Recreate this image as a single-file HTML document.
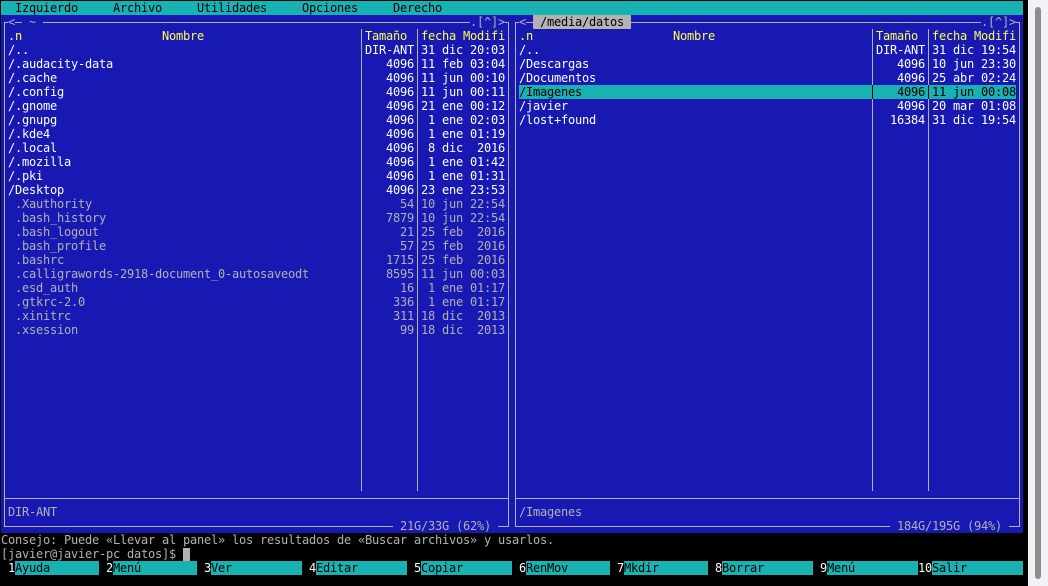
<!DOCTYPE html>
<html lang="es"><head><meta charset="utf-8"><title>mc</title>
<style>
html,body{margin:0;padding:0;background:#000;}
body{position:relative;width:1048px;height:586px;overflow:hidden;font:12px/14px "DejaVu Sans Mono",monospace;letter-spacing:-0.224px;color:#b2b2b2;}
div,i,b{position:absolute;font-style:normal;font-weight:normal;white-space:pre;}
.bg{background:#18b2b2}.bl{background:#1818b2}.l{background:#b2b2b2}
.r{left:0;width:1048px;height:14px}
.w{color:#fff}.y{color:#ffff54}.k{color:#000}.g{color:#b2b2b2}
.s,.S{width:49px;text-align:right}
.n{left:8px}.s{left:365px}.d{left:421px}
.N{left:519px}.S{left:876px}.D{left:932px}
</style></head><body>
<div style="left:1028px;top:0;width:20px;height:586px;background:#f2f1f6"></div>
<div style="left:1035px;top:7px;width:6px;height:572px;background:#8e8e8e;border-radius:3px"></div>
<div style="left:0;top:0;width:1028px;height:586px;background:#000"></div>
<div class="bg" style="left:1px;top:1px;width:1022px;height:14px"></div>
<div class="bl" style="left:1px;top:15px;width:1022px;height:518px"></div>

<div class="r k" style="top:1px"><i style="left:15px">Izquierdo</i><i style="left:113px">Archivo</i><i style="left:197px">Utilidades</i><i style="left:302px">Opciones</i><i style="left:393px">Derecho</i></div>

<!-- selected row -->
<div class="bg" style="left:519px;top:85px;width:497px;height:14px"></div>

<!-- frame lines -->
<div class="l" style="left:4px;top:22px;width:1px;height:505px"></div>
<div class="l" style="left:508px;top:22px;width:1px;height:505px"></div>
<div class="l" style="left:515px;top:22px;width:1px;height:505px"></div>
<div class="l" style="left:1019px;top:22px;width:1px;height:505px"></div>
<div class="l" style="left:4px;top:22px;width:4px;height:1px"></div>
<div class="l" style="left:15px;top:22px;width:7px;height:1px"></div>
<div class="l" style="left:43px;top:22px;width:427px;height:1px"></div>
<div class="l" style="left:505px;top:22px;width:3px;height:1px"></div>
<div class="l" style="left:515px;top:22px;width:4px;height:1px"></div>
<div class="l" style="left:526px;top:22px;width:7px;height:1px"></div>
<div class="l" style="left:631px;top:22px;width:350px;height:1px"></div>
<div class="l" style="left:1016px;top:22px;width:3px;height:1px"></div>
<div class="l" style="left:4px;top:498px;width:505px;height:1px"></div>
<div class="l" style="left:515px;top:498px;width:505px;height:1px"></div>
<div class="l" style="left:4px;top:526px;width:389px;height:1px"></div>
<div class="l" style="left:498px;top:526px;width:11px;height:1px"></div>
<div class="l" style="left:515px;top:526px;width:375px;height:1px"></div>
<div class="l" style="left:1009px;top:526px;width:11px;height:1px"></div>
<div class="l" style="left:361px;top:29px;width:1px;height:462px"></div>
<div class="l" style="left:417px;top:29px;width:1px;height:462px"></div>
<div class="l" style="left:872px;top:29px;width:1px;height:462px"></div>
<div class="l" style="left:928px;top:29px;width:1px;height:462px"></div>
<div style="left:872px;top:85px;width:1px;height:14px;background:#000"></div>
<div style="left:928px;top:85px;width:1px;height:14px;background:#000"></div>

<!-- title row -->
<div class="r" style="top:15px"><i style="left:8px">&lt;</i><i style="left:29px">~</i><i style="left:470px">.[^]&gt;</i><i style="left:519px">&lt;</i><i class="k" style="left:533px;width:98px;background:#b2b2b2"> /media/datos </i><i style="left:981px">.[^]&gt;</i></div>

<!-- headers -->
<div class="r y" style="top:29px"><i class="n">.n</i><i style="left:162px">Nombre</i><i style="left:365px">Tamaño</i><i class="d">fecha Modifi</i><i class="N">.n</i><i style="left:673px">Nombre</i><i style="left:876px">Tamaño</i><i class="D">fecha Modifi</i></div>

<!-- rows -->
<div class="r w" style="top:43px"><i class="n">/..</i><i class="s">DIR-ANT</i><i class="d">31 dic 20:03</i><i class="N">/..</i><i class="S">DIR-ANT</i><i class="D">31 dic 19:54</i></div>
<div class="r w" style="top:57px"><i class="n">/.audacity-data</i><i class="s">4096</i><i class="d">11 feb 03:04</i><i class="N">/Descargas</i><i class="S">4096</i><i class="D">10 jun 23:30</i></div>
<div class="r w" style="top:71px"><i class="n">/.cache</i><i class="s">4096</i><i class="d">11 jun 00:10</i><i class="N">/Documentos</i><i class="S">4096</i><i class="D">25 abr 02:24</i></div>
<div class="r w" style="top:85px"><i class="n">/.config</i><i class="s">4096</i><i class="d">11 jun 00:11</i><i class="N k">/Imagenes</i><i class="S k">4096</i><i class="D k">11 jun 00:08</i></div>
<div class="r w" style="top:99px"><i class="n">/.gnome</i><i class="s">4096</i><i class="d">21 ene 00:12</i><i class="N">/javier</i><i class="S">4096</i><i class="D">20 mar 01:08</i></div>
<div class="r w" style="top:113px"><i class="n">/.gnupg</i><i class="s">4096</i><i class="d"> 1 ene 02:03</i><i class="N">/lost+found</i><i class="S">16384</i><i class="D">31 dic 19:54</i></div>
<div class="r w" style="top:127px"><i class="n">/.kde4</i><i class="s">4096</i><i class="d"> 1 ene 01:19</i></div>
<div class="r w" style="top:141px"><i class="n">/.local</i><i class="s">4096</i><i class="d"> 8 dic  2016</i></div>
<div class="r w" style="top:155px"><i class="n">/.mozilla</i><i class="s">4096</i><i class="d"> 1 ene 01:42</i></div>
<div class="r w" style="top:169px"><i class="n">/.pki</i><i class="s">4096</i><i class="d"> 1 ene 01:31</i></div>
<div class="r w" style="top:183px"><i class="n">/Desktop</i><i class="s">4096</i><i class="d">23 ene 23:53</i></div>
<div class="r" style="top:197px"><i class="n"> .Xauthority</i><i class="s">54</i><i class="d">10 jun 22:54</i></div>
<div class="r" style="top:211px"><i class="n"> .bash_history</i><i class="s">7879</i><i class="d">10 jun 22:54</i></div>
<div class="r" style="top:225px"><i class="n"> .bash_logout</i><i class="s">21</i><i class="d">25 feb  2016</i></div>
<div class="r" style="top:239px"><i class="n"> .bash_profile</i><i class="s">57</i><i class="d">25 feb  2016</i></div>
<div class="r" style="top:253px"><i class="n"> .bashrc</i><i class="s">1715</i><i class="d">25 feb  2016</i></div>
<div class="r" style="top:267px"><i class="n"> .calligrawords-2918-document_0-autosaveodt</i><i class="s">8595</i><i class="d">11 jun 00:03</i></div>
<div class="r" style="top:281px"><i class="n"> .esd_auth</i><i class="s">16</i><i class="d"> 1 ene 01:17</i></div>
<div class="r" style="top:295px"><i class="n"> .gtkrc-2.0</i><i class="s">336</i><i class="d"> 1 ene 01:17</i></div>
<div class="r" style="top:309px"><i class="n"> .xinitrc</i><i class="s">311</i><i class="d">18 dic  2013</i></div>
<div class="r" style="top:323px"><i class="n"> .xsession</i><i class="s">99</i><i class="d">18 dic  2013</i></div>

<!-- mini status -->
<div class="r" style="top:505px"><i class="n">DIR-ANT</i><i class="N">/Imagenes</i></div>
<div class="r" style="top:519px"><i style="left:400px">21G/33G (62%)</i><i style="left:897px">184G/195G (94%)</i></div>

<!-- hint + prompt -->
<div class="r" style="top:533px"><i style="left:1px">Consejo: Puede «Llevar al panel» los resultados de «Buscar archivos» y usarlos.</i></div>
<div class="r" style="top:547px"><i style="left:1px">[javier@javier-pc datos]$ </i></div>
<div style="left:183px;top:548px;width:7px;height:13px;background:#b2b2b2"></div>

<!-- function keys -->
<div class="bg" style="left:15px;top:561px;width:84px;height:14px"></div>
<div class="bg" style="left:113px;top:561px;width:84px;height:14px"></div>
<div class="bg" style="left:211px;top:561px;width:91px;height:14px"></div>
<div class="bg" style="left:316px;top:561px;width:91px;height:14px"></div>
<div class="bg" style="left:421px;top:561px;width:91px;height:14px"></div>
<div class="bg" style="left:526px;top:561px;width:84px;height:14px"></div>
<div class="bg" style="left:624px;top:561px;width:84px;height:14px"></div>
<div class="bg" style="left:722px;top:561px;width:91px;height:14px"></div>
<div class="bg" style="left:827px;top:561px;width:91px;height:14px"></div>
<div class="bg" style="left:932px;top:561px;width:91px;height:14px"></div>
<div class="r k" style="top:561px"><i class="w" style="left:8px">1</i><i style="left:15px">Ayuda</i><i class="w" style="left:106px">2</i><i style="left:113px">Menú</i><i class="w" style="left:204px">3</i><i style="left:211px">Ver</i><i class="w" style="left:309px">4</i><i style="left:316px">Editar</i><i class="w" style="left:414px">5</i><i style="left:421px">Copiar</i><i class="w" style="left:519px">6</i><i style="left:526px">RenMov</i><i class="w" style="left:617px">7</i><i style="left:624px">Mkdir</i><i class="w" style="left:715px">8</i><i style="left:722px">Borrar</i><i class="w" style="left:820px">9</i><i style="left:827px">Menú</i><i class="w" style="left:918px">10</i><i style="left:932px">Salir</i></div>
</body></html>
